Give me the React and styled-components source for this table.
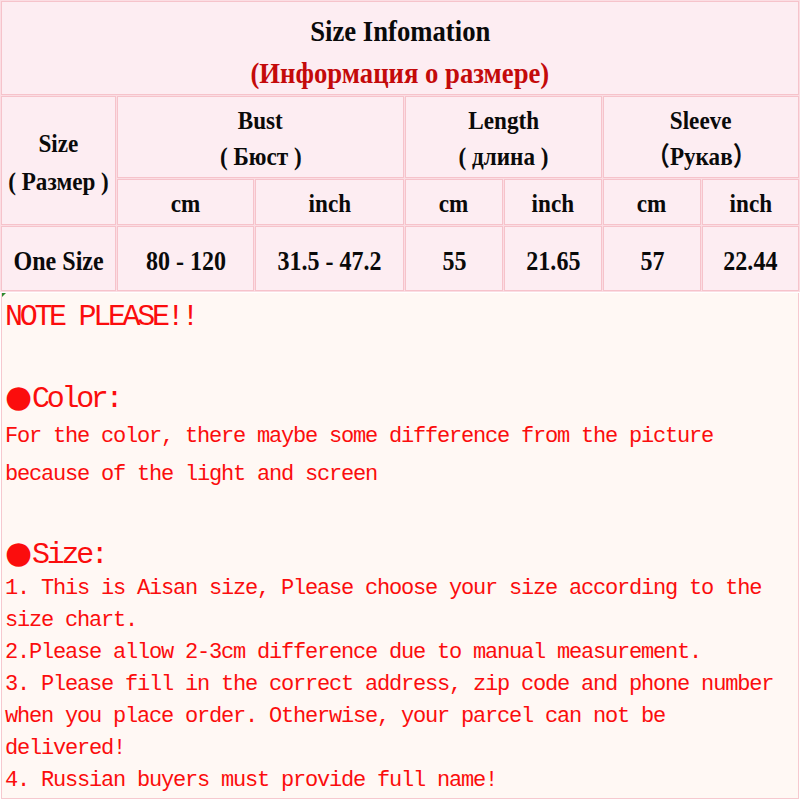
import styled, { createGlobalStyle } from "styled-components";

const GlobalStyle = createGlobalStyle`
  * {
    box-sizing: border-box;
  }
  body {
    margin: 0;
    background: #ffffff;
  }
`;

const columns = [115, 137, 149, 98, 98, 98, 97];

function App() {
  return (
    <>
      <GlobalStyle />
      <Page>
        <SizeTable>
          <colgroup>
            {columns.map((w, i) => (
              <Col key={i} $w={w} />
            ))}
          </colgroup>
          <tbody>
            <Row $h={94}>
              <TitleCell colSpan={7}>
                <Title>
                  <Squeeze>Size Infomation</Squeeze>
                </Title>
                <RuTitle>
                  <Squeeze>(Информация о размере)</Squeeze>
                </RuTitle>
              </TitleCell>
            </Row>
            <Row $h={82}>
              <HeadCell rowSpan={2} $lh={38}>
                <Squeeze>Size</Squeeze>
                <br />
                <Squeeze>( Размер )</Squeeze>
              </HeadCell>
              <HeadCell colSpan={2}>
                <Squeeze>Bust</Squeeze>
                <br />
                <Squeeze>( Бюст )</Squeeze>
              </HeadCell>
              <HeadCell colSpan={2}>
                <Squeeze>Length</Squeeze>
                <br />
                <Squeeze>( длина )</Squeeze>
              </HeadCell>
              <HeadCell colSpan={2}>
                <Squeeze>Sleeve</Squeeze>
                <br />
                <Squeeze>（Рукав）</Squeeze>
              </HeadCell>
            </Row>
            <Row $h={46}>
              {["cm", "inch", "cm", "inch", "cm", "inch"].map((u, i) => (
                <UnitCell key={i}>
                  <Squeeze>{u}</Squeeze>
                </UnitCell>
              ))}
            </Row>
            <Row $h={65}>
              {["One Size", "80 - 120", "31.5 - 47.2", "55", "21.65", "57", "22.44"].map(
                (v, i) => (
                  <DataCell key={i}>
                    <Squeeze>{v}</Squeeze>
                  </DataCell>
                )
              )}
            </Row>
          </tbody>
        </SizeTable>

        <NoteBox>
          <Heading>NOTE PLEASE!!</Heading>

          <Heading $gap={45}>
            <Dot>●</Dot>Color:
          </Heading>
          <Text $lh={38} $gap={2}>
            For the color, there maybe some difference from the picture
            <br />
            because of the light and screen
          </Text>

          <Heading $gap={41}>
            <Dot>●</Dot>Size:
          </Heading>
          <Text $lh={32} $gap={1}>
            1. This is Aisan size, Please choose your size according to the
            <br />
            size chart.
            <br />
            2.Please allow 2-3cm difference due to manual measurement.
            <br />
            3. Please fill in the correct address, zip code and phone number
            <br />
            when you place order. Otherwise, your parcel can not be
            <br />
            delivered!
            <br />
            4. Russian buyers must provide full name!
          </Text>
        </NoteBox>
      </Page>
    </>
  );
}

export default App;

const Page = styled.div`
  width: 800px;
  height: 800px;
  overflow: hidden;
  display: flex;
  flex-direction: column;
`;

const SizeTable = styled.table`
  width: 800px;
  table-layout: fixed;
  border-collapse: separate;
  border-spacing: 1px;
  background: #fbdde3;
  font-family: "Liberation Serif", "Noto Sans CJK SC", serif;
  font-weight: 700;
  color: #0a0a0a;
`;

const Col = styled.col`
  width: ${(p) => p.$w}px;
`;

const Row = styled.tr`
  height: ${(p) => p.$h}px;
`;

const Cell = styled.td`
  padding: 0;
  border: 1px solid #f6c3cb;
  background: #fdedf2;
  text-align: center;
  vertical-align: middle;
  white-space: nowrap;
`;

const Squeeze = styled.span`
  display: inline-block;
  transform: scaleX(0.89);
`;

const TitleCell = styled(Cell)`
  padding-top: 8px;
  line-height: 42px;
  font-size: 30px;
`;

const Title = styled.div`
  color: #0a0a0a;
`;

const RuTitle = styled.div`
  color: #c40a0a;
`;

const HeadCell = styled(Cell)`
  font-size: 26px;
  line-height: ${(p) => p.$lh || 36}px;
  padding-top: 4px;
`;

const UnitCell = styled(Cell)`
  font-size: 26px;
  line-height: 28px;
  padding-top: 4px;
`;

const DataCell = styled(Cell)`
  font-size: 27px;
  line-height: 30px;
  padding-top: 4px;
`;

const NoteBox = styled.div`
  position: relative;
  flex: 1;
  margin: 1px;
  padding: 7px 3px 0;
  background: #fff8f4;
  border: 1px solid #f6c9cf;
  border-top: none;
  color: #fb0d0d;
  font-family: "Liberation Mono", "Courier New", monospace;

  &::before {
    content: "";
    position: absolute;
    left: 0;
    top: 0;
    border-top: 4px solid #2f8a2f;
    border-right: 4px solid transparent;
  }
`;

const Heading = styled.div`
  margin-top: ${(p) => p.$gap || 0}px;
  font-size: 30px;
  line-height: 34px;
  letter-spacing: -3.3px;
  white-space: nowrap;
`;

const Dot = styled.span`
  font-family: "DejaVu Sans", sans-serif;
  font-size: 31px;
  letter-spacing: 0;
  margin-left: 0;
  margin-right: 0;
`;

const Text = styled.div`
  margin-top: ${(p) => p.$gap || 0}px;
  font-size: 22px;
  line-height: ${(p) => p.$lh}px;
  letter-spacing: -1.2px;
  white-space: nowrap;
`;
